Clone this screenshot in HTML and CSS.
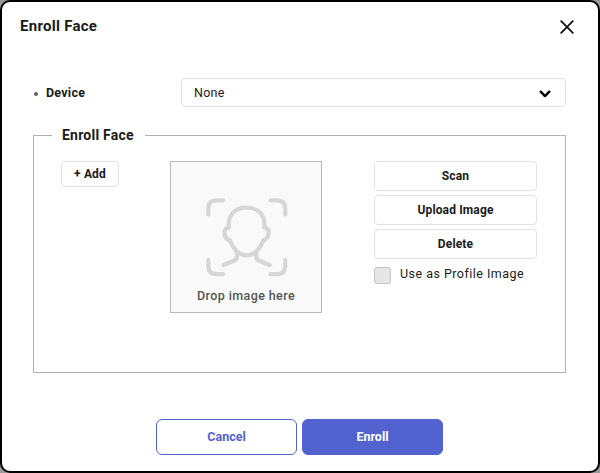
FILE: index.html
```html
<!DOCTYPE html>
<html lang="en">
<head>
<meta charset="utf-8">
<title>Enroll Face</title>
<link rel="stylesheet" href="styles.css">
</head>
<body>
<main class="dialog">
  <header class="header">
    <h1 class="title">Enroll Face</h1>
    <button class="close" aria-label="Close">
      <svg width="14" height="14" viewBox="0 0 14 14"><path d="M1.2 1.2 12.8 12.8M12.8 1.2 1.2 12.8"/></svg>
    </button>
  </header>
  <div class="device">
    <span class="dot"></span>
    <span class="device-label">Device</span>
    <div class="select">
      <span class="select-value">None</span>
      <svg class="chevron" width="12" height="8" viewBox="0 0 12 8"><path d="M1.7 1.7 6 6.1 10.3 1.7"/></svg>
    </div>
  </div>
  <fieldset class="group">
    <legend class="legend">Enroll Face</legend>
    <div class="content">
      <button class="btn add">+ Add</button>
      <div class="drop">
        <svg class="face" width="82" height="80" viewBox="0 0 82 80">
          <path d="M2.3 16.5V10.5Q2.3 2.3 10.5 2.3H17M64.5 2.3H71Q79.2 2.3 79.2 10.5V16.5M2.3 62V68Q2.3 76.2 10.5 76.2H17M64.5 76.2H71Q79.2 76.2 79.2 68V62"/>
          <path d="M23 29.5C21.5 17 29 9.7 40.6 9.7S59.7 17 58.2 29.5C62.4 29.8 63.4 33.5 62.2 37.5C61.4 40 59.9 41.7 57.2 42.5C53.7 51.5 47.7 57.3 40.6 57.3S27.5 51.5 24 42.5C21.3 41.7 19.8 40 19 37.5C17.8 33.5 18.8 29.8 23 29.5Z"/>
          <path d="M31 55V58.5Q31 61.5 28 62.8L17.5 67M50.2 55V58.5Q50.2 61.5 53.2 62.8L63.7 67"/>
        </svg>
        <span class="drop-text">Drop image here</span>
      </div>
      <div class="actions">
        <button class="btn">Scan</button>
        <button class="btn">Upload Image</button>
        <button class="btn">Delete</button>
        <label class="profile"><span class="checkbox"></span><span class="profile-text">Use as Profile Image</span></label>
      </div>
    </div>
  </fieldset>
  <footer class="footer">
    <button class="footer-btn cancel">Cancel</button>
    <button class="footer-btn enroll">Enroll</button>
  </footer>
</main>
</body>
</html>
```
FILE: styles.css
```css
* {
  box-sizing: border-box;
}

body {
  margin: 0;
  background: #999;
  font-family: Roboto, "Liberation Sans", sans-serif;
  font-size: 12px;
  color: #1a1a1a;
}

button {
  font: inherit;
  color: inherit;
  padding: 0;
}

svg {
  display: block;
  fill: none;
  stroke-linecap: round;
  stroke-linejoin: round;
}

.dialog {
  width: 600px;
  height: 473px;
  border: 2px solid #000;
  border-radius: 10px;
  background: #fff;
  overflow: hidden;
}

.header {
  display: flex;
  justify-content: space-between;
  padding: 14px 24px 0 18px;
  height: 76px;
}

.title {
  margin: 0;
  font-size: 15px;
  line-height: 20px;
  font-weight: 700;
  letter-spacing: 0.28px;
}

.close {
  width: 14px;
  height: 14px;
  margin-top: 4px;
  border: 0;
  background: none;
  stroke: #111;
  stroke-width: 1.8;
}

.device {
  display: flex;
  align-items: center;
  height: 29px;
  margin: 0 32px 0 31px;
}

.dot {
  width: 4px;
  height: 4px;
  margin: 2px 8px 0 1px;
  border-radius: 50%;
  background: #606060;
}

.device-label {
  width: 135px;
  font-size: 12.5px;
  font-weight: 700;
  letter-spacing: 0.25px;
}

.select {
  flex: 1;
  display: flex;
  align-items: center;
  justify-content: space-between;
  height: 29px;
  padding: 0 14px 0 12px;
  border: 1px solid #e2e2e2;
  border-radius: 4px;
}

.select-value {
  font-size: 12.5px;
  letter-spacing: 0.25px;
}

.chevron {
  margin-top: 2px;
  stroke: #000;
  stroke-width: 2.4;
}

.group {
  height: 247px;
  margin: 19px 32px 0 31px;
  padding: 0;
  border: 1px solid #b2b2b2;
}

.legend {
  margin-left: 18px;
  padding: 0 11px 0 10px;
  height: 18px;
  font-size: 14px;
  line-height: 18px;
  font-weight: 700;
  letter-spacing: 0.23px;
}

.content {
  display: flex;
  align-items: flex-start;
  padding: 17px 0 0 27px;
}

.btn {
  height: 30px;
  border: 1px solid #e2e2e2;
  border-radius: 4px;
  background: #fff;
  font-weight: 700;
  letter-spacing: 0.14px;
}

.add {
  width: 58px;
  height: 26px;
}

.drop {
  display: flex;
  flex-direction: column;
  align-items: center;
  width: 152px;
  height: 152px;
  margin-left: 51px;
  padding-top: 36px;
  border: 1px solid #b8b8b8;
  background: #f9f9f9;
}

.face {
  margin-left: 1px;
  stroke: #d6d6d6;
  stroke-width: 4.2;
}

.drop-text {
  margin-top: 10px;
  line-height: 16px;
  font-size: 12.5px;
  font-weight: 500;
  color: #555;
  letter-spacing: 0.4px;
}

.actions {
  display: flex;
  flex-direction: column;
  gap: 4px;
  width: 163px;
  margin-left: 52px;
}

.profile {
  display: flex;
  align-items: center;
  height: 18px;
  margin-top: 3px;
}

.checkbox {
  width: 17px;
  height: 17px;
  margin-right: 9px;
  border: 1px solid #c4c4c4;
  border-radius: 3px;
  background: #e6e6e6;
}

.profile-text {
  margin-bottom: 3px;
  font-size: 12.5px;
  letter-spacing: 0.47px;
  white-space: nowrap;
}

.footer {
  display: flex;
  justify-content: center;
  gap: 5px;
  margin: 46px 1px 0 0;
}

.footer-btn {
  width: 141px;
  height: 36px;
  padding-bottom: 1px;
  border: 1px solid #5263cf;
  border-radius: 6px;
  font-size: 12.5px;
  font-weight: 700;
}

.cancel {
  background: #fff;
  color: #5263cf;
}

.enroll {
  background: #5263cf;
  color: #fff;
}
```
